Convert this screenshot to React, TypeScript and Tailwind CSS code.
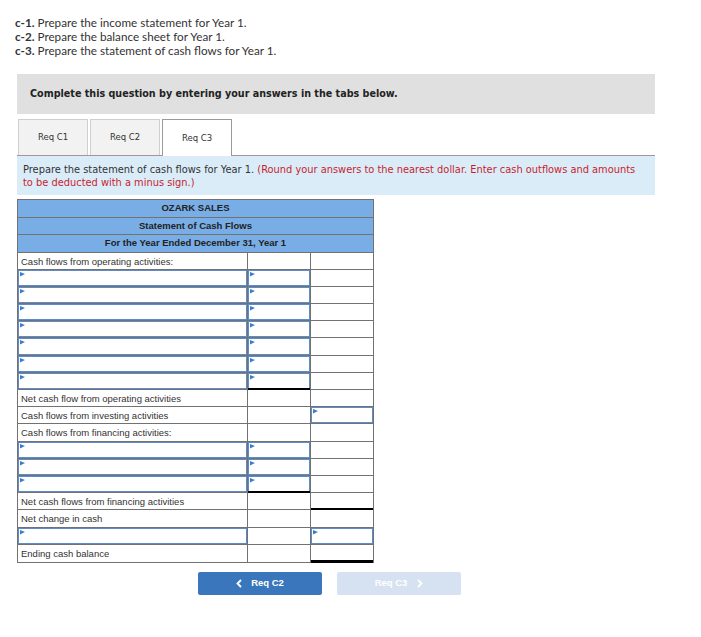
import React from "react";

type Cell = { kind: "empty" | "input" | "label"; text?: string; bb?: "black" | "double" };
type Row = Cell[];

const L = (t: string): Cell => ({ kind: "label", text: t });
const I = (bb?: "black" | "double"): Cell => ({ kind: "input", bb });
const E = (bb?: "black" | "double"): Cell => ({ kind: "empty", bb });

const rows: Row[] = [
  [L("Cash flows from operating activities:"), E(), E()],
  [I(), I(), E()],
  [I(), I(), E()],
  [I(), I(), E()],
  [I(), I(), E()],
  [I(), I(), E()],
  [I(), I(), E()],
  [I(), I("black"), E()],
  [L("Net cash flow from operating activities"), E(), E()],
  [L("Cash flows from investing activities"), E(), I()],
  [L("Cash flows from financing activities:"), E(), E()],
  [I(), I(), E()],
  [I(), I(), E()],
  [I(), I("black"), E()],
  [L("Net cash flows from financing activities"), E(), E("black")],
  [L("Net change in cash"), E(), E()],
  [I(), E(), I()],
  [L("Ending cash balance"), E(), E("double")],
];

function Tri() {
  return (
    <svg className="absolute left-[1px] top-[1px]" width="5" height="5" viewBox="0 0 5 5">
      <polygon points="0,0 5,2 0,4.5" fill="#3d7cc9" />
    </svg>
  );
}

function CellView({ c, w, last }: { c: Cell; w: string; last: boolean }) {
  const br = last ? "" : "border-r border-[#727272]";
  const bb =
    c.bb === "black"
      ? "after:absolute after:left-0 after:right-0 after:bottom-[-1px] after:h-[2px] after:bg-black"
      : c.bb === "double"
      ? "after:absolute after:left-0 after:right-0 after:bottom-[-1px] after:h-[3px] after:bg-black"
      : "";
  return (
    <div className={`relative ${w} ${br} ${bb} h-full`}>
      {c.kind === "label" && (
        <div className="pl-[3px] leading-[17px] text-[9.5px] text-[#333]">{c.text}</div>
      )}
      {c.kind === "input" && (
        <div className="absolute inset-0 border-[1.5px] border-[#5d8ccb] bg-white">
          <Tri />
        </div>
      )}
    </div>
  );
}

export default function App() {
  return (
    <div className="w-[701px] h-[637px] bg-white relative" style={{ fontFamily: "'Liberation Sans', Arial, sans-serif" }}>
      <div className="pt-[15px] pl-[15px] text-[11.7px] leading-[14px] text-[#333]" style={{ fontFamily: "Lato, 'Open Sans', sans-serif" }}>
        <div><b>c-1.</b> Prepare the income statement for Year 1.</div>
        <div><b>c-2.</b> Prepare the balance sheet for Year 1.</div>
        <div><b>c-3.</b> Prepare the statement of cash flows for Year 1.</div>
      </div>

      <div className="ml-[17px] mt-[17px] w-[638px]">
        <div
          className="h-[40px] bg-[#e0e0e0] flex items-center pl-[13px] text-[9.6px] font-bold text-[#222]"
          style={{ fontFamily: "'DejaVu Sans', Verdana, sans-serif" }}
        >
          Complete this question by entering your answers in the tabs below.
        </div>

        <div className="mt-[5px] flex items-end h-[37px] border-b border-[#9a9a9a]" style={{ fontFamily: "'DejaVu Sans', Verdana, sans-serif" }}>
          <div className="ml-[1px] w-[70px] h-[36px] bg-[#f2f2f2] border border-b-0 border-[#cfcfcf] flex items-center justify-center text-[8.5px] text-[#333]">Req C1</div>
          <div className="ml-[2px] w-[70px] h-[36px] bg-[#f2f2f2] border border-b-0 border-[#cfcfcf] flex items-center justify-center text-[8.5px] text-[#333]">Req C2</div>
          <div className="ml-[2px] w-[70px] h-[37px] bg-white border border-b-0 border-[#9a9a9a] flex items-center justify-center text-[8.5px] text-[#333] mb-[-1px]">Req C3</div>
        </div>

        <div
          className="bg-[#dbecf9] h-[39px] pl-[6px] pt-[7px] text-[9.85px] leading-[13px] text-[#333] whitespace-nowrap"
          style={{ fontFamily: "'DejaVu Sans', Verdana, sans-serif" }}
        >
          Prepare the statement of cash flows for Year 1.{" "}
          <span className="text-[#c81e2c]">
            (Round your answers to the nearest dollar. Enter cash outflows and amounts
            <br />
            to be deducted with a minus sign.)
          </span>
        </div>

        <div className="mt-[4px] w-[357px] border border-[#727272]">
          {["OZARK SALES", "Statement of Cash Flows", "For the Year Ended December 31, Year 1"].map((t) => (
            <div key={t} className="h-[17.5px] bg-[#79ade5] border-b border-[#727272] flex items-center justify-center text-[9.5px] font-bold text-[#222]">
              {t}
            </div>
          ))}
          {rows.map((r, i) => (
            <div key={i} className={`flex h-[17.2px] ${i < rows.length - 1 ? "border-b border-[#727272]" : ""}`}>
              <CellView c={r[0]} w="w-[230px]" last={false} />
              <CellView c={r[1]} w="w-[63px]" last={false} />
              <CellView c={r[2]} w="flex-1" last={true} />
            </div>
          ))}
        </div>
      </div>

      <div className="flex ml-[198px] mt-[9px] gap-[15px]" style={{ fontFamily: "'Liberation Sans', Arial, sans-serif" }}>
        <div className="w-[124px] h-[23px] rounded-[2px] bg-[#3a76bb] flex items-center justify-center text-white text-[9.5px] font-bold gap-[9px]">
          <svg width="6" height="9" viewBox="0 0 6 9"><path d="M5 1 L1.5 4.5 L5 8" stroke="white" strokeWidth="1.8" fill="none" /></svg>
          <span>Req C2</span>
        </div>
        <div className="w-[124px] h-[23px] rounded-[2px] bg-[#d6e2f1] flex items-center justify-center text-white text-[9.5px] font-bold gap-[10px]">
          <span>Req C3</span>
          <svg width="6" height="9" viewBox="0 0 6 9"><path d="M1 1 L4.5 4.5 L1 8" stroke="white" strokeWidth="1.8" fill="none" /></svg>
        </div>
      </div>
    </div>
  );
}
